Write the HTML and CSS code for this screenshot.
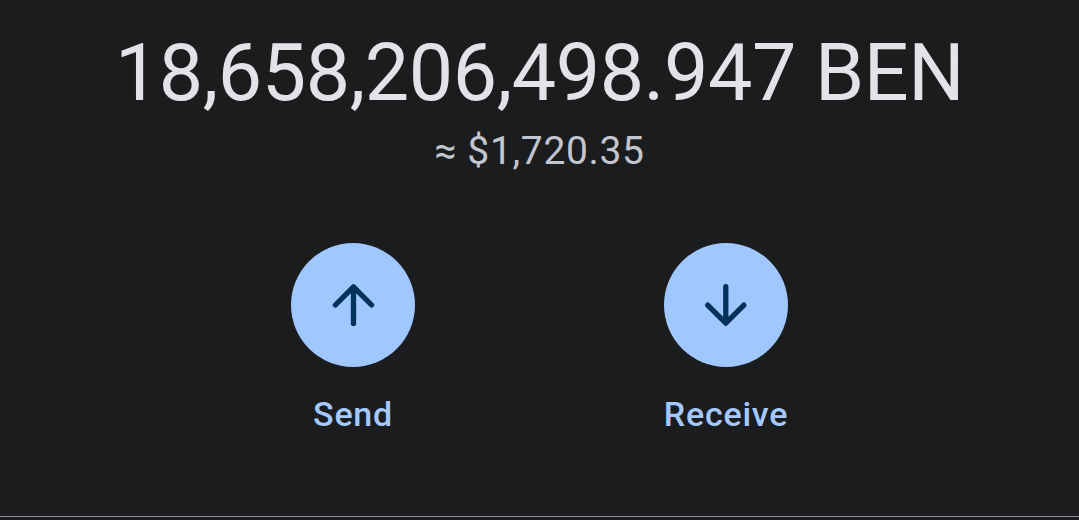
FILE: index.html
```html
<!DOCTYPE html>
<html lang="en">
<head>
<meta charset="utf-8">
<title>BEN balance</title>
<link rel="stylesheet" href="styles.css">
</head>
<body>
<main class="wallet">
  <h1 class="balance">18,658,206,498.947 BEN</h1>
  <p class="fiat">≈ $1,720.35</p>
  <div class="actions">
    <button class="action">
      <span class="disc"><svg class="icon" viewBox="0 0 48 48"><path d="M24.5 42.4V6M6.4 24 24.5 5.9 42.6 24"/></svg></span>
      <span class="label">Send</span>
    </button>
    <button class="action">
      <span class="disc"><svg class="icon" viewBox="0 0 48 48"><path d="M23.8 5.6V42M5.7 24.1l18.1 18.1 18.1-18.1"/></svg></span>
      <span class="label">Receive</span>
    </button>
  </div>
</main>
</body>
</html>
```

FILE: styles.css
```css
* { box-sizing: border-box; }
body { margin: 0; background: #1b1c1e; font-family: Roboto, sans-serif; }
.wallet {
  height: 517px;
  padding-top: 27px;
  border-bottom: 1px solid #8e8c96;
  text-align: center;
}
.balance { margin: 0; font-size: 79px; line-height: 93px; font-weight: 400; letter-spacing: -0.45px; color: #e3e2e6; white-space: nowrap; }
.fiat { margin: 7px 0 0; font-size: 39px; line-height: 48px; letter-spacing: 0.65px; color: #c3c6cf; }
.actions { display: flex; justify-content: center; gap: 249px; margin-top: 68px; }
.action { display: flex; flex-direction: column; align-items: center; width: 124px; padding: 0; border: 0; background: none; font-family: inherit; }
.disc { display: flex; align-items: center; justify-content: center; width: 124px; height: 124px; border-radius: 50%; background: #a0c8ff; }
.icon { width: 48px; height: 48px; fill: none; stroke: #00325a; stroke-width: 5.3; stroke-linecap: round; stroke-linejoin: round; }
.label { margin-top: 27px; font-size: 34px; line-height: 40px; font-weight: 500; letter-spacing: 0.75px; color: #a5c8ff; }
```
